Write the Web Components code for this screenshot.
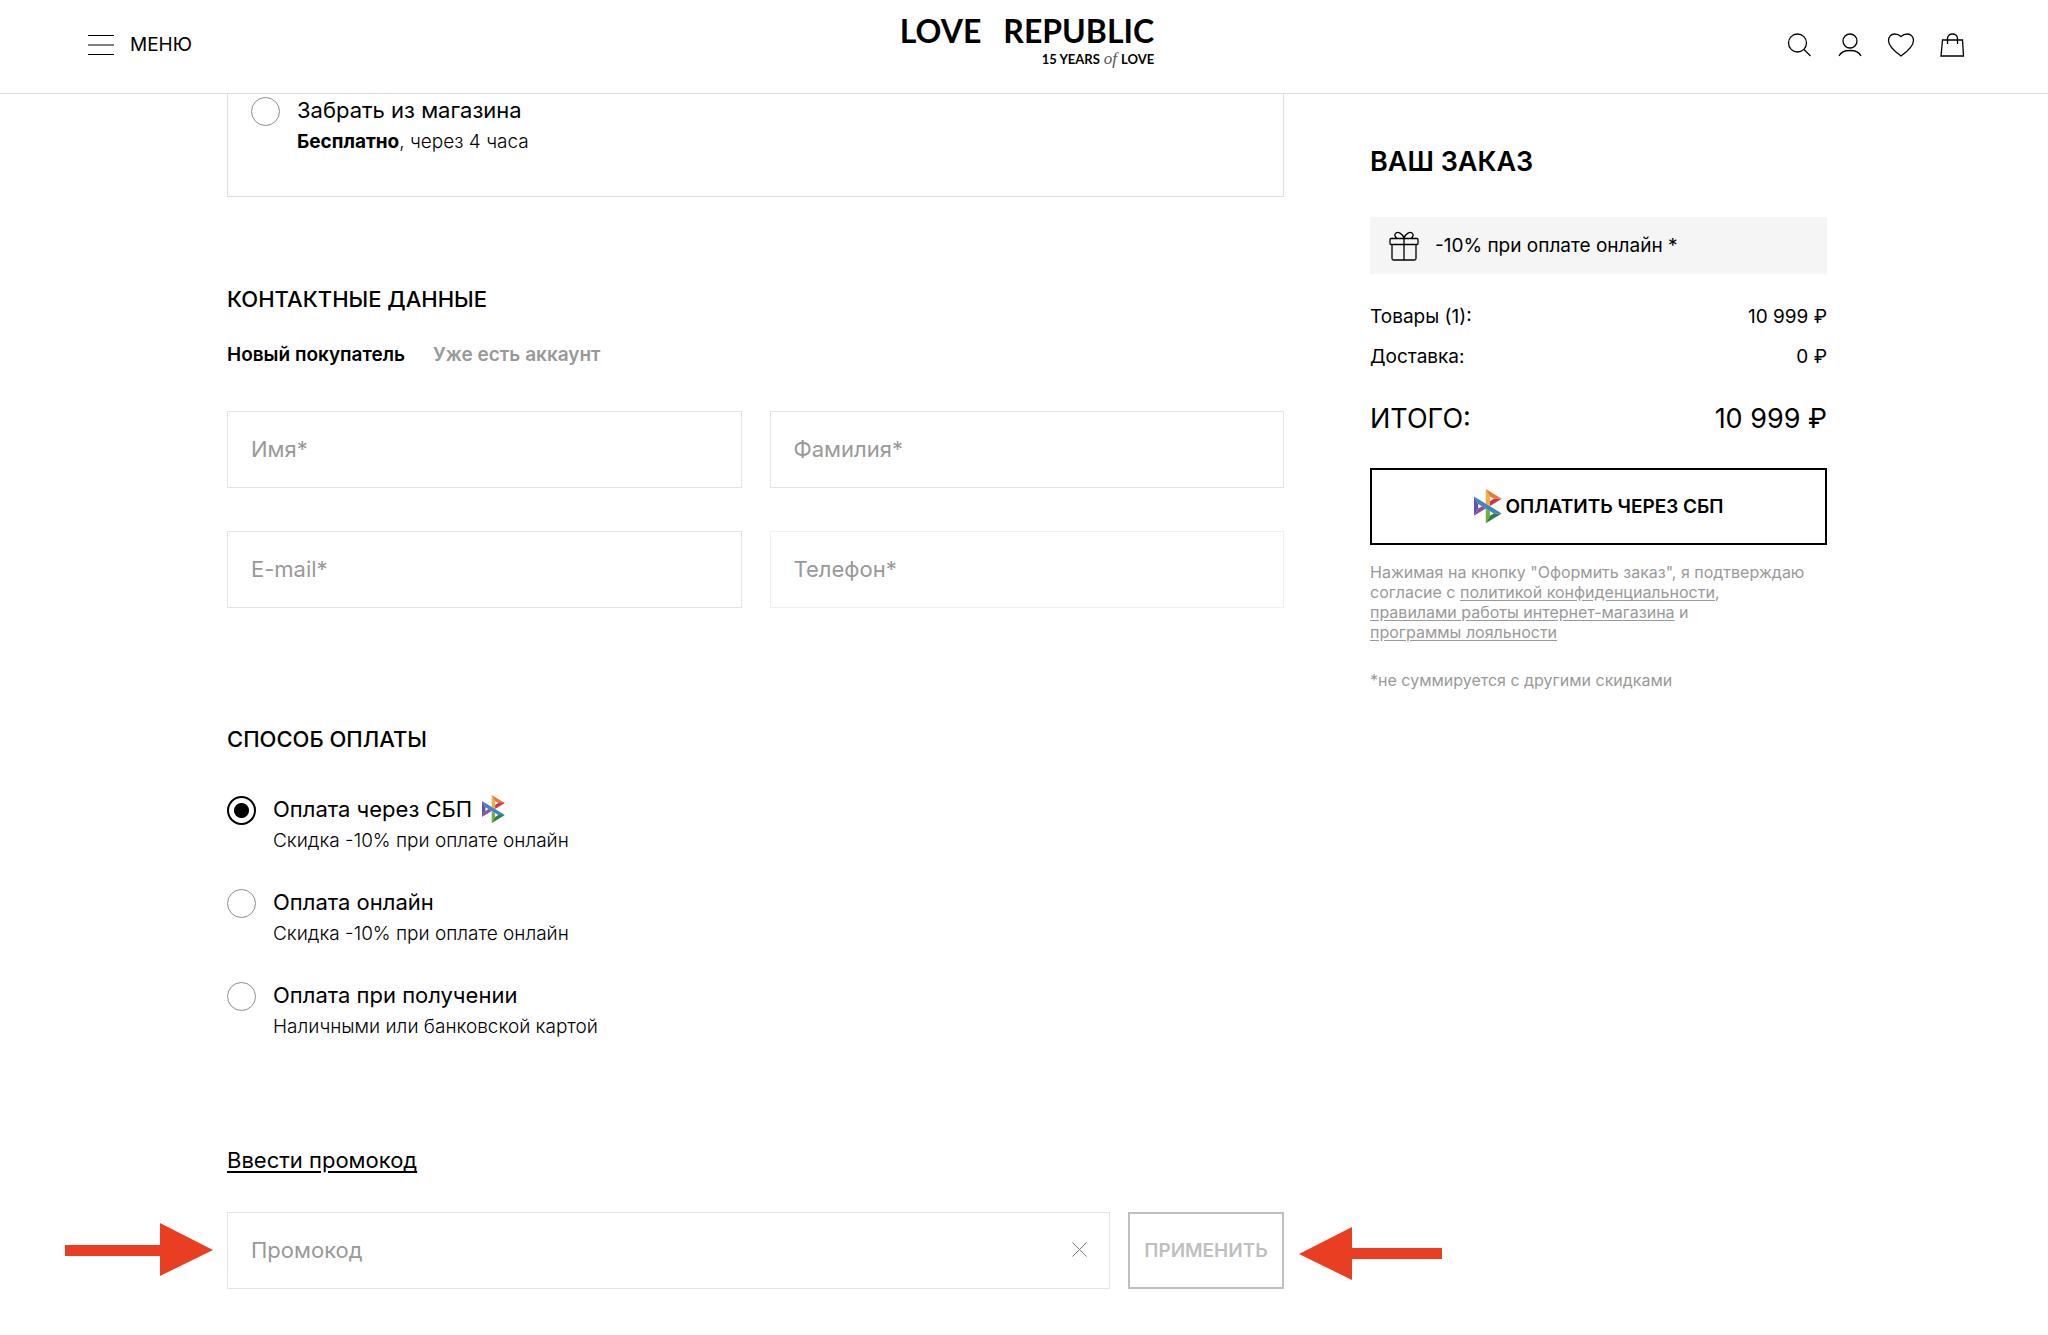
<!DOCTYPE html>
<html lang="ru">
<head>
<meta charset="utf-8">
<meta name="viewport" content="width=device-width, initial-scale=1">
<title>LOVE REPUBLIC</title>
<style>
  body {
    margin: 0;
    background: white;
    color: black;
    font-family: Inter, "Noto Sans", sans-serif;
    font-size: 19px;
    line-height: 24px;
  }
</style>
</head>
<body>
<checkout-page></checkout-page>

<script>
/* Adds an open shadow root with the given markup */
function attach(host, html) {
  host.attachShadow({ mode: 'open' }).innerHTML = html;
}

/* Logo of the fast payment system */
class SbpLogo extends HTMLElement {
  constructor() {
    super();
    attach(this, `
      <style>
        :host { display: block; width: 28px; flex: none; }
        svg { display: block; width: 100%; }
      </style>
      <svg viewBox="0 0 98 120" aria-hidden="true">
        <path d="M0 26.1l14.5 26v15.8L0 93.9z" fill="#5b57a2"/>
        <path d="M55.8 42.6l13.6-8.3h27.9L55.8 59.7z" fill="#d8304f"/>
        <path d="M55.7 26l.1 34.4-14.6-9V0z" fill="#f0b040"/>
        <path d="M97.3 34.3H69.4L55.7 26 41.2 0z" fill="#e07b3a"/>
        <path d="M55.8 94V77.3l-14.6-8.8V120z" fill="#72b043"/>
        <path d="M69.4 85.7L14.5 52.1 0 26.1l97.2 59.6z" fill="#3d84c6"/>
        <path d="M41.2 120l14.6-26 13.6-8.3h27.8z" fill="#2f8040"/>
        <path d="M0 93.9l41.3-25.4L27.5 60l-13 7.9z" fill="#8e4fa0"/>
      </svg>
    `);
  }
}
customElements.define('sbp-logo', SbpLogo);

class SiteHeader extends HTMLElement {
  constructor() {
    super();
    attach(this, `
      <style>
        :host {
          display: grid;
          grid-template-columns: 1fr auto 1fr;
          height: 93px;
          padding: 0 82px 0 88px;
          border-bottom: 1px solid #dedede;
          background: white;
        }
        button {
          display: flex;
          align-items: center;
          padding: 0;
          border: 0;
          background: none;
          color: inherit;
          font: inherit;
          cursor: pointer;
        }
        svg {
          display: block;
          fill: none;
          stroke: black;
        }
        .menu { justify-self: start; gap: 15px; height: 90px; }
        .logo {
          padding-top: 13px;
          color: inherit;
          font-family: Lato, sans-serif;
          font-weight: 700;
          text-decoration: none;
        }
        .name {
          display: flex;
          gap: 22px;
          font-size: 32px;
          line-height: 36px;
        }
        .years {
          display: flex;
          justify-content: flex-end;
          align-items: baseline;
          gap: 4px;
          font-size: 13px;
          line-height: 20px;
        }
        .years i {
          font-family: "Liberation Serif", serif;
          font-size: 17px;
          font-weight: 400;
          color: #555;
        }
        .actions {
          display: flex;
          justify-content: flex-end;
          gap: 23px;
          height: 90px;
        }
      </style>
      <button class="menu" type="button">
        <svg width="27" height="20"><path d="M0 .5h26M0 10h26M0 19.5h26"/></svg>
        <span>МЕНЮ</span>
      </button>
      <a class="logo" href="#">
        <span class="name"><span>LOVE</span> <span>REPUBLIC</span></span>
        <span class="years"><span>15 YEARS</span> <i>of</i> <span>LOVE</span></span>
      </a>
      <nav class="actions">
        <button type="button" aria-label="Поиск">
          <svg width="28" height="28" viewBox="0 0 28 28" stroke-width="1.3">
            <circle cx="12.5" cy="12" r="9"/><path d="M19 18.5l6.5 6.5"/>
          </svg>
        </button>
        <button type="button" aria-label="Профиль">
          <svg width="28" height="28" viewBox="0 0 28 28" stroke-width="1.3">
            <circle cx="14" cy="10" r="7"/><path d="M3 25c2-4.500 6-5.500 11-5.500S23 20.500 25 25"/>
          </svg>
        </button>
        <button type="button" aria-label="Избранное">
          <svg width="28" height="28" viewBox="0 0 28 28" stroke-width="1.3">
            <path d="M14 25C7 20 1.500 15 1.500 9.500 1.500 6 4 3 7.500 3c2.500 0 5 1 6.500 2.500C15.500 4 18 3 20.500 3 24 3 26.500 6 26.500 9.500 26.500 15 21 20 14 25z"/>
          </svg>
        </button>
        <button type="button" aria-label="Корзина">
          <svg width="28" height="28" viewBox="0 0 28 28" stroke-width="1.3">
            <path d="M4.500 9h20l1 16H3zM9.500 13V7.500c0-6 10-6 10 0V13"/>
          </svg>
        </button>
      </nav>
    `);
  }
}
customElements.define('site-header', SiteHeader);

class RadioOption extends HTMLElement {
  connectedCallback() {
    attach(this, `
      <style>
        :host { display: block; }
        label {
          display: grid;
          grid-template-columns: 29px 1fr;
          column-gap: 17px;
          cursor: pointer;
        }
        input {
          appearance: none;
          width: 29px;
          height: 29px;
          margin: 0;
          border: 1px solid #8c8c8c;
          border-radius: 50%;
        }
        input:checked {
          border: 2px solid black;
          background: radial-gradient(circle, black 7px, transparent 8px);
        }
        .title {
          display: flex;
          gap: 10px;
          align-items: center;
          height: 26px;
          font-size: 22px;
        }
        .note {
          grid-column: 2;
          padding-top: 4px;
          font-weight: 300;
        }
        ::slotted(sbp-logo) { width: 23px; }
        ::slotted(b) { font-weight: 700; }
      </style>
      <label>
        <input type="radio" name="option" ${this.hasAttribute('checked') ? 'checked' : ''}>
        <span class="title"><slot name="title"></slot></span>
        <span class="note"><slot></slot></span>
      </label>
    `);
    this.input = this.shadowRoot.querySelector('input');
    this.input.addEventListener('change', () => this.clearSiblings());
  }

  // Each radio lives in its own shadow tree, so the group is kept by hand
  clearSiblings() {
    this.parentNode.querySelectorAll('radio-option').forEach((option) => {
      if (option !== this) option.input.checked = false;
    });
  }
}
customElements.define('radio-option', RadioOption);

class TextField extends HTMLElement {
  connectedCallback() {
    const type = this.getAttribute('type') || 'text';
    attach(this, `
      <style>
        :host { display: block; min-width: 0; }
        .field {
          display: grid;
          align-items: center;
          box-sizing: border-box;
          height: 77px;
          border: 1px solid var(--field-border, #e3e3e3);
        }
        label, input, .extra { grid-area: 1 / 1; }
        label {
          padding: 0 0 2px 23px;
          color: #999;
          font-size: 22px;
          pointer-events: none;
        }
        input {
          box-sizing: border-box;
          width: 100%;
          height: 100%;
          padding: 0 23px;
          border: 0;
          outline: 0;
          background: none;
          font: inherit;
          font-size: 22px;
        }
        .field:has(input:not(:placeholder-shown)) label { visibility: hidden; }
        .extra { justify-self: end; padding-right: 22px; }
      </style>
      <div class="field">
        <input id="input" type="${type}" placeholder=" ">
        <label for="input">${this.getAttribute('label')}</label>
        <div class="extra"><slot></slot></div>
      </div>
    `);
  }
}
customElements.define('text-field', TextField);

class ContactForm extends HTMLElement {
  constructor() {
    super();
    attach(this, `
      <style>
        :host { display: block; }
        .tabs { display: flex; gap: 28px; padding-top: 30px; }
        button {
          padding: 0;
          border: 0;
          background: none;
          color: #999;
          font: inherit;
          font-weight: 600;
          cursor: pointer;
        }
        button.active { color: black; }
        .fields {
          display: grid;
          grid-template-columns: 1fr 1fr;
          gap: 43px 28px;
          padding-top: 44px;
        }
        .phone { --field-border: #f0f0f0; }
      </style>
      <slot></slot>
      <div class="tabs">
        <button class="active" type="button">Новый покупатель</button>
        <button type="button">Уже есть аккаунт</button>
      </div>
      <div class="fields">
        <text-field label="Имя*"></text-field>
        <text-field label="Фамилия*"></text-field>
        <text-field label="E-mail*" type="email"></text-field>
        <text-field class="phone" label="Телефон*" type="tel"></text-field>
      </div>
    `);
  }
}
customElements.define('contact-form', ContactForm);

class PromoCode extends HTMLElement {
  constructor() {
    super();
    attach(this, `
      <style>
        :host { display: block; }
        a { color: inherit; font-size: 22px; text-underline-offset: 3px; }
        .row {
          position: relative;
          display: grid;
          grid-template-columns: 1fr 156px;
          gap: 18px;
          margin-top: 38px;
        }
        button { padding: 0; background: none; font: inherit; cursor: pointer; }
        .clear { border: 0; }
        .clear svg { display: block; fill: none; stroke: #777; }
        .apply {
          border: 2px solid #bfbfbf;
          color: #bfbfbf;
          font-weight: 600;
        }
        /* Pointers laid over the page margins */
        .arrow { position: absolute; fill: #ea3e23; }
        .arrow.left { right: calc(100% + 14px); top: 11px; }
        .arrow.right { left: calc(100% + 15px); top: 15px; }
      </style>
      <a href="#">Ввести промокод</a>
      <div class="row">
        <text-field label="Промокод">
          <button class="clear" type="button" aria-label="Очистить">
            <svg width="15" height="15"><path d="M.5.5l14 14M14.500.5l-14 14"/></svg>
          </button>
        </text-field>
        <button class="apply" type="button">ПРИМЕНИТЬ</button>
        <svg class="arrow left" width="148" height="54"><path d="M0 22h95V0l53 27-53 26V33H0z"/></svg>
        <svg class="arrow right" width="143" height="54"><path d="M143 21H53V0L0 27l53 26V32h90z"/></svg>
      </div>
    `);
  }
}
customElements.define('promo-code', PromoCode);

class OrderSummary extends HTMLElement {
  constructor() {
    super();
    attach(this, `
      <style>
        :host { display: block; }
        h2 {
          margin: 0;
          font-size: 27px;
          font-weight: 600;
          line-height: 36px;
        }
        .promo {
          display: flex;
          align-items: center;
          gap: 16px;
          height: 57px;
          margin-top: 37px;
          padding-left: 19px;
          background: #f5f5f5;
        }
        .promo svg { fill: none; stroke: black; }
        dl { margin: 0; padding-top: 31px; }
        dl div {
          display: flex;
          justify-content: space-between;
          margin-bottom: 16px;
        }
        dd { margin: 0; }
        dl .total {
          margin: 32px 0 0;
          font-size: 27px;
          line-height: 36px;
        }
        .pay {
          display: flex;
          justify-content: center;
          align-items: center;
          gap: 4px;
          width: 100%;
          height: 77px;
          margin-top: 31px;
          padding: 0;
          border: 2px solid black;
          background: white;
          color: black;
          font: inherit;
          font-weight: 600;
          cursor: pointer;
        }
        p {
          margin: 17px 0 0;
          color: #999;
          font-size: 16px;
          line-height: 20px;
        }
        p + p { margin-top: 28px; }
        a { color: inherit; text-underline-offset: 2px; }
      </style>
      <h2>ВАШ ЗАКАЗ</h2>
      <div class="promo">
        <svg width="30" height="30" viewBox="0 0 30 30" stroke-width="1.300">
          <rect x="1" y="7.500" width="28" height="6" rx="1"/>
          <path d="M3 13.500V27.500q0 1.500 1.500 1.500h21q1.500 0 1.500-1.500V13.500M15 7.500V29M15 7C13 2 9 .5 7 2S6 6 8 7.500M15 7c2-5 6-6.500 8-5s1 4-1 5.500"/>
        </svg>
        <span>-10% при оплате онлайн *</span>
      </div>
      <dl>
        <div><dt>Товары (1):</dt><dd>10 999 ₽</dd></div>
        <div><dt>Доставка:</dt><dd>0 ₽</dd></div>
        <div class="total"><dt>ИТОГО:</dt><dd>10 999 ₽</dd></div>
      </dl>
      <button class="pay" type="button"><sbp-logo></sbp-logo>ОПЛАТИТЬ ЧЕРЕЗ СБП</button>
      <p>
        Нажимая на кнопку "Оформить заказ", я подтверждаю<br>
        согласие с <a href="#">политикой конфиденциальности</a>,<br>
        <a href="#">правилами работы интернет-магазина</a> и<br>
        <a href="#">программы лояльности</a>
      </p>
      <p>*не суммируется с другими скидками</p>
    `);
  }
}
customElements.define('order-summary', OrderSummary);

class CheckoutPage extends HTMLElement {
  constructor() {
    super();
    attach(this, `
      <style>
        :host { display: block; }
        main {
          display: grid;
          grid-template-columns: 1057fr 457fr;
          align-items: start;
          gap: 86px;
          padding: 0 221px 46px 227px;
        }
        .delivery {
          padding: 3px 23px 42px;
          border: 1px solid #dedede;
          border-top: 0;
        }
        h3 {
          margin: 0;
          font-size: 22px;
          font-weight: 500;
          line-height: 28px;
        }
        contact-form { padding-top: 88px; }
        .payment { padding-top: 117px; }
        .options {
          display: grid;
          gap: 36px;
          padding-top: 43px;
        }
        promo-code { padding-top: 109px; }
        order-summary { padding-top: 50px; }
      </style>
      <site-header></site-header>
      <main>
        <div>
          <section class="delivery">
            <radio-option>
              <span slot="title">Забрать из магазина</span>
              <b>Бесплатно</b>, через 4 часа
            </radio-option>
          </section>
          <contact-form><h3>КОНТАКТНЫЕ ДАННЫЕ</h3></contact-form>
          <section class="payment">
            <h3>СПОСОБ ОПЛАТЫ</h3>
            <div class="options">
              <radio-option checked>
                <span slot="title">Оплата через СБП</span>
                <sbp-logo slot="title"></sbp-logo>
                Скидка -10% при оплате онлайн
              </radio-option>
              <radio-option>
                <span slot="title">Оплата онлайн</span>
                Скидка -10% при оплате онлайн
              </radio-option>
              <radio-option>
                <span slot="title">Оплата при получении</span>
                Наличными или банковской картой
              </radio-option>
            </div>
          </section>
          <promo-code></promo-code>
        </div>
        <order-summary></order-summary>
      </main>
    `);
  }
}
customElements.define('checkout-page', CheckoutPage);
</script>
</body>
</html>
